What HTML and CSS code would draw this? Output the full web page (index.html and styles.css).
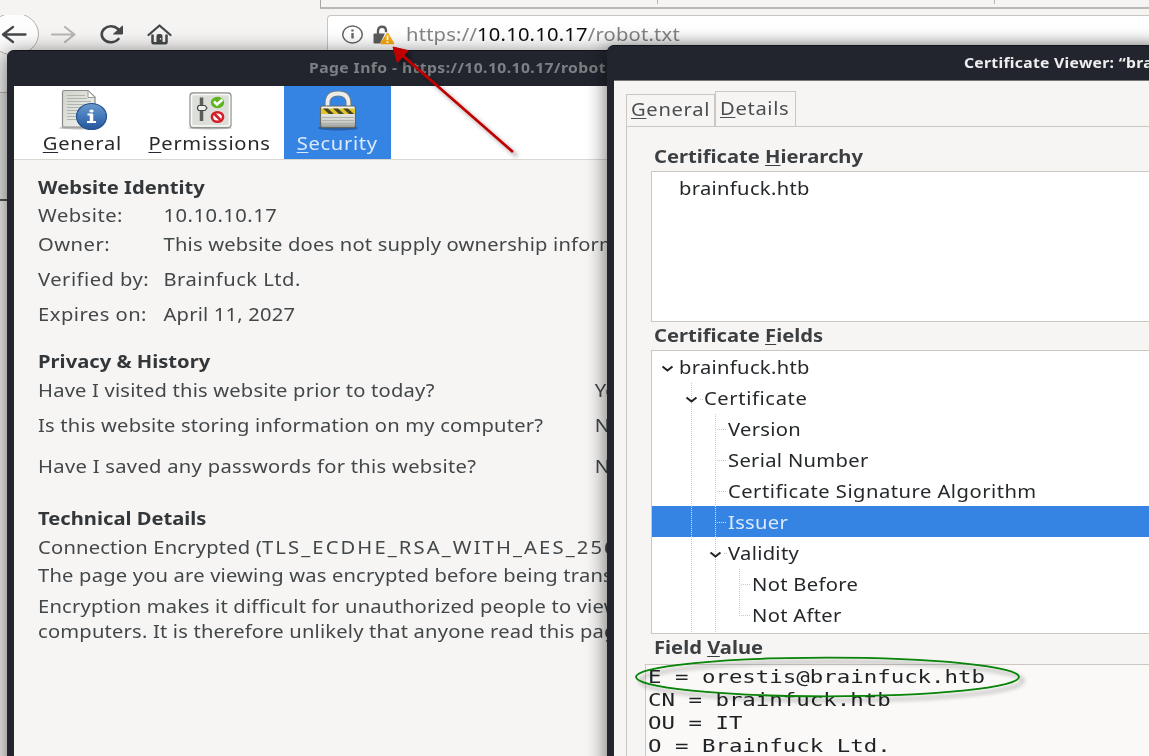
FILE: index.html
```html
<!DOCTYPE html>
<html lang="en">
<head>
<meta charset="utf-8">
<title>Certificate Viewer</title>
<link rel="stylesheet" href="styles.css">
</head>
<body>
<div class="desktop">
  <div class="browser">
    <div class="tabstrip"><i></i><i></i></div>
    <div class="navbar">
      <svg class="nav-icons" width="180" height="60" viewBox="0 0 180 60" fill="none">
        <ellipse cx="14" cy="19" rx="24.500" ry="21" fill="#fdfdfd" stroke="#b4b1ad"/>
        <path d="M25.500 19.500H3M13 12L3 19.500l10 7.500" stroke="#45484a" stroke-width="2.300" stroke-linecap="round" stroke-linejoin="round"/>
        <path d="M52 19.500h22M65 12L74.500 19.500l-9.500 7.500" stroke="#b5b5b5" stroke-width="2.200" stroke-linecap="round" stroke-linejoin="round"/>
        <path d="M118.500 24A9.300 8 0 1 1 118 14" stroke="#45484a" stroke-width="2.600" stroke-linecap="round"/>
        <path d="M122.500 11v8h-9z" fill="#45484a" stroke="#45484a" stroke-linejoin="round"/>
        <path d="M148.500 20L159.500 10.500l11 9.500" stroke="#45484a" stroke-width="2.300" stroke-linecap="round" stroke-linejoin="round"/>
        <path d="M152.500 19.500v7.800q0 1 1 1h12q1 0 1-1V19.500" stroke="#45484a" stroke-width="2.500"/>
        <path d="M156.500 21q0-2 2-2h2q2 0 2 2V28.500h-6z" fill="#45484a"/>
        <path d="M160.500 23v1.500" stroke="#f3f2f1" stroke-width="1.300"/>
      </svg>
      <div class="urlbar">
        <svg width="58" height="30" viewBox="0 0 58 30" fill="none">
          <ellipse cx="14.500" cy="14.500" rx="9.800" ry="8.500" stroke="#666" stroke-width="1.500"/>
          <path d="M14.500 13V18.500M14.500 9.500v1.900" stroke="#666" stroke-width="2.400"/>
          <path d="M40 15v-4q0-4.200 4-4.200t4 4v1.500" stroke="#5b5b5b" stroke-width="2.400"/>
          <path d="M36.500 13.500h10.500l-5 10h-5.500q-1 0-1-1v-8q0-1 1-1z" fill="#5b5b5b"/>
          <path d="M49.500 13.500l6 10H43z" fill="#f7a90c" stroke="#f7a90c" stroke-width="1.500" stroke-linejoin="round"/>
          <path d="M49.500 15.500v4.500M49.500 21.300v1.700" stroke="#fff" stroke-width="1.800"/>
        </svg>
        <span class="url wide">https://<b>10.10.10.17</b>/robot.txt</span>
      </div>
    </div>
    <div class="edge-lines"></div>
  </div>

  <section class="window page-info">
    <header class="titlebar"><span class="wide">Page Info - https://10.10.10.17/robot.txt</span></header>
    <div class="pi-body">
      <nav class="categories">
        <div class="category cat-general">
          <svg width="50" height="44" viewBox="0 0 50 44">
            <defs>
              <linearGradient id="paper" x2="1" y2="1"><stop stop-color="#cfd3cb"/><stop offset="1" stop-color="#f5f5f2"/></linearGradient>
              <linearGradient id="ball" x2="0" y2="1"><stop stop-color="#6c99cb"/><stop offset=".5" stop-color="#4479bb"/><stop offset="1" stop-color="#26559b"/></linearGradient>
            </defs>
            <g transform="translate(-1 0)">
            <ellipse cx="22" cy="40" rx="20" ry="1.500" fill="#bbb"/>
            <path d="M5.500 4q0-1.500 1.500-1.500h24l7 6.500v30h-32.500z" fill="url(#paper)" stroke="#8b8e86" stroke-width="1.200"/>
            <path d="M31 2.500v7h7z" fill="#fff" stroke="#999c94"/>
            <path d="M10 7.500h18M10 10.500h20M10 13.500h24M10 16.500h22M10 19.500h18M10 22.500h11M10 25.500h10M10 28.500h11M10 31.500h11" stroke="#b0b4ac" stroke-width="1.200"/>
            <ellipse cx="34.500" cy="28.500" rx="15" ry="13" fill="url(#ball)" stroke="#285393" stroke-width="1.200"/>
            <path d="M30.500 26.500h4v7.500M30 34h9" stroke="#fff" stroke-width="2.200" fill="none"/>
            <path d="M34.500 26v8" stroke="#fff" stroke-width="3.500"/>
            <ellipse cx="34.500" cy="23" rx="2.200" ry="1.500" fill="#fff"/>
            </g>
          </svg>
          <span><u>G</u>eneral</span>
        </div>
        <div class="category cat-permissions">
          <svg width="50" height="44" viewBox="0 0 50 44">
            <ellipse cx="25" cy="40" rx="22" ry="1.500" fill="#bbb"/>
            <rect x="5" y="5" width="41" height="34.500" rx="3" fill="#dcded9" stroke="#90938d" stroke-width="1.300"/>
            <rect x="6.500" y="6.500" width="38" height="31.500" rx="1.500" fill="none" stroke="#fafafa" stroke-width="1.500"/>
            <path d="M16.500 9.500v23.500" stroke="#5a5e5b" stroke-width="3.500"/>
            <path d="M13.500 17.500h6.500l2 2.500-2 2.500h-6.500q-2-2.500 0-5z" fill="#eee" stroke="#444846" stroke-width="1.200"/>
            <ellipse cx="32.500" cy="14.500" rx="6.700" ry="5.700" fill="#5eb51c"/>
            <path d="M29 13.500l3 3 5.500-5" stroke="#fff" stroke-width="2.600" fill="none"/>
            <ellipse cx="32.500" cy="29" rx="5.600" ry="4.800" fill="#fff" stroke="#d51f27" stroke-width="2.600"/>
            <path d="M29.500 26l6 6" stroke="#d51f27" stroke-width="2.600"/>
          </svg>
          <span><u>P</u>ermissions</span>
        </div>
        <div class="category cat-security selected">
          <svg width="50" height="44" viewBox="0 0 50 44">
            <defs>
              <linearGradient id="steel" x2="0" y2="1"><stop stop-color="#f7f7f5"/><stop offset=".7" stop-color="#d2d3cf"/><stop offset="1" stop-color="#969993"/></linearGradient>
            </defs>
            <ellipse cx="25" cy="40" rx="20" ry="2.500" fill="#25528e" opacity=".75"/>
            <path d="M14.500 22V15Q14.500 5.500 25 5.500T35.500 15v7" fill="none" stroke="#787b76" stroke-width="5.500"/>
            <path d="M14.500 22V15Q14.500 5.500 25 5.500T35.500 15v7" fill="none" stroke="#ecedea" stroke-width="3.800"/>
            <rect x="7.500" y="18" width="35" height="21.500" rx="2" fill="url(#steel)" stroke="#646760" stroke-width="1.200"/>
            <path d="M8 20.500h34v5.500H8z" fill="#dfc52c"/>
            <path d="M16 26l-6-5.500h5l6 5.500zM26 26l-6-5.500h5l6 5.500zM36 26l-6-5.500h5l6 5.500z" fill="#4a4520"/>
            <path d="M9 29.500h32M9 32.500h32M9 35.500h32" stroke="#b0b2ad"/>
          </svg>
          <span><u>S</u>ecurity</span>
        </div>
      </nav>
      <div class="pi-content wide">
        <h2>Website Identity</h2>
        <dl>
          <div class="row looser"><dt>Website:</dt><dd>10.10.10.17</dd></div>
          <div class="row g1"><dt class="looser">Owner:</dt><dd>This website does not supply ownership information.</dd></div>
          <div class="row looser g7"><dt>Verified by:</dt><dd>Brainfuck Ltd.</dd></div>
          <div class="row g7"><dt class="looser">Expires on:</dt><dd>April 11, 2027</dd></div>
        </dl>
        <h2 class="g19">Privacy &amp; History</h2>
        <div class="row question g1"><span>Have I visited this website prior to today?</span><b>Yes</b></div>
        <div class="row question g7"><span>Is this website storing information on my computer?</span><b>No</b></div>
        <div class="row question g13"><span class="passwords">Have I saved any passwords for this website?</span><b>No</b></div>
        <h2 class="g24">Technical Details</h2>
        <p class="g1">Connection Encrypted (<span class="cipher">TLS_ECDHE_RSA_WITH_AES_256_GCM_SHA384)</span></p>
        <p>The page you are viewing was encrypted before being transmitted.</p>
        <p class="g5 tight">Encryption makes it difficult for unauthorized people to view</p>
        <p class="tight">computers. It is therefore unlikely that anyone read this page</p>
      </div>
    </div>
  </section>

  <section class="window cert">
    <header class="titlebar"><span class="wide">Certificate Viewer: “brainfuck.htb”</span></header>
    <div class="cert-body">
      <div class="tabs">
        <div class="tab"><span class="wide"><u>G</u>eneral</span></div>
        <div class="tab active"><span class="wide"><u>D</u>etails</span></div>
      </div>
      <div class="panel">
        <h3><span class="wide">Certificate <u>H</u>ierarchy</span></h3>
        <div class="box hierarchy"><span class="wide">brainfuck.htb</span></div>
        <h3><span class="wide">Certificate <u>F</u>ields</span></h3>
        <div class="box tree">
          <svg class="guides" width="100" height="282" fill="none">
            <g stroke="#c9c9c9" stroke-dasharray="1 1">
              <path d="M39.500 32V155M39.500 186V281M63.500 63V155M63.500 186V281M87.500 218v48M48 48.500h4M65 78.500h9M65 109.500h9M65 140.500h9M72 202.500h3M89 233.500h9M89 264.500h9"/>
            </g>
            <path d="M39.500 155v31M63.500 155v31M65 171.500h9" stroke="#d5e5fa" stroke-dasharray="1 1"/>
            <path d="M10.500 15.500l5 4 5-4M34.500 46.500l5 4 5-4M58.500 201.500l5 4 5-4" stroke="#222" stroke-width="2"/>
          </svg>
          <div class="item l0"><span class="wide">brainfuck.htb</span></div>
          <div class="item l1"><span class="wide looser">Certificate</span></div>
          <div class="item l2"><span class="wide">Version</span></div>
          <div class="item l2"><span class="wide">Serial Number</span></div>
          <div class="item l2"><span class="wide algorithm">Certificate Signature Algorithm</span></div>
          <div class="item l2 current"><span class="wide">Issuer</span></div>
          <div class="item l2"><span class="wide">Validity</span></div>
          <div class="item l3"><span class="wide">Not Before</span></div>
          <div class="item l3"><span class="wide">Not After</span></div>
        </div>
        <h3 class="value-label"><span class="wide">Field <u>V</u>alue</span></h3>
        <pre class="value"><span>E = orestis@brainfuck.htb
CN = brainfuck.htb
OU = IT
O = Brainfuck Ltd.</span></pre>
      </div>
    </div>
  </section>

  <svg class="annotations" width="1149" height="756" fill="none">
    <defs><filter id="soft" x="-10%" y="-20%" width="120%" height="150%"><feDropShadow dx="4" dy="4" stdDeviation="2" flood-opacity=".4"/></filter></defs>
    <g filter="url(#soft)">
      <path d="M402 55L513 152" stroke="#c00000" stroke-width="2.800"/>
      <path d="M393 47l15 3.500-10.500 12z" fill="#c00000" stroke="#c00000"/>
    </g>
    <ellipse cx="827.500" cy="677" rx="191.500" ry="19.300" stroke="#078207" stroke-width="1.800" filter="url(#soft)"/>
  </svg>
</div>
</body>
</html>
```
FILE: styles.css
```css
* { box-sizing: border-box; }
body { margin: 0; font-family: "Noto Sans", "Open Sans", sans-serif; }
.desktop { position: relative; width: 1149px; height: 756px; overflow: hidden; background: #f5f4f3; }
u { text-underline-offset: 2px; text-decoration-thickness: 1px; }
h2, h3, p, dl, dd, pre { margin: 0; }

/* horizontally extended letterforms */
.wide { display: inline-block; transform: scaleX(1.12); transform-origin: 0 0; }

.browser { height: 756px; display: flex; flex-direction: column; }
.tabstrip { height: 9px; margin-left: 320px; border-left: 1px solid #aaa8a5; border-bottom: 2px solid #bab7b5; display: flex; }
.tabstrip i { width: 337px; height: 4px; border-right: 1px solid #b8b5b3; }
.navbar { display: flex; height: 84px; padding-top: 6px; border-bottom: 1px solid #b9b6b3; }
.nav-icons { flex: none; margin-right: 147px; }
.urlbar { flex: 1; height: 40px; border: 1px solid #c9c5c1; border-right: 0; border-radius: 4px 0 0 0; background: #fff; display: flex; padding: 3px 0 0 10px; }
.urlbar svg { margin-top: 1px; flex: none; }
.url { margin-left: 10px; font-size: 18px; line-height: 31px; color: #858585; white-space: nowrap; letter-spacing: .18px; }
.url b { font-weight: 400; color: #0c0c0d; }
.edge-lines { width: 7px; height: 108px; border-bottom: 2px solid #555; background: #e8e7e6; }

.window { position: absolute; background: #22252e; overflow: hidden; }
.titlebar { white-space: nowrap; font-weight: 700; font-size: 14px; }
.page-info { left: 7px; top: 50px; width: 1149px; height: 730px; border-radius: 7px 0 0 0; box-shadow: 0 4px 20px 2px rgba(0,0,0,.5); border-top: 1px solid #11141a; }
.page-info .titlebar { height: 35px; line-height: 34px; padding-left: 302px; color: #7c8084; letter-spacing: .38px; }
.pi-body { height: 700px; margin-left: 7px; background: #f6f5f4; }
.categories { height: 74px; background: #fff; border-bottom: 1px solid #dad6d2; display: flex; }
.category { display: flex; flex-direction: column; align-items: center; font-size: 18px; color: #26282a; letter-spacing: .6px; }
.category svg { margin-top: 2px; flex: none; }
.category span { line-height: 23px; transform: scaleX(1.12); }
.cat-general { width: 137px; }
.cat-permissions { width: 117px; }
.cat-security { width: 107px; margin-left: 16px; }
.category.selected { background: #3584e4; color: #dce9fa; height: 73px; }
.pi-content { padding: 13px 0 0 21.500px; font-size: 18px; line-height: 28px; color: #434749; white-space: nowrap; letter-spacing: .16px; }
.pi-content h2 { font-size: 18px; line-height: 28px; font-weight: 700; color: #343739; letter-spacing: 0; }
.row { display: flex; height: 28px; }
.row dt { width: 112px; }
.question span { width: 497px; }
.question b { font-weight: 400; }
.looser { letter-spacing: .42px; }
.passwords { letter-spacing: .26px; }
.cipher { letter-spacing: 1.9px; }
.g1 { margin-top: 1px; }
.g5 { margin-top: 5px; }
.g7 { margin-top: 7px; }
.g13 { margin-top: 13px; }
.g19 { margin-top: 19px; }
.g24 { margin-top: 24px; }
.pi-content .tight { line-height: 25px; }

.cert { left: 607px; top: 45px; width: 1000px; height: 760px; border-radius: 7px 0 0 0; border-top: 1px solid #11141a; box-shadow: 0 4px 20px 1px rgba(0,0,0,.55); }
.cert .titlebar { height: 34px; line-height: 33px; padding-left: 357px; color: #eee; letter-spacing: .27px; }
.cert-body { margin-left: 7px; height: 720px; padding: 10px 0 0 12px; background: #f6f5f4; border-top: 1px solid #777; }
.tabs { height: 35px; display: flex; align-items: flex-end; font-size: 18px; color: #4b4e50; letter-spacing: .6px; }
.tab { height: 32px; width: 89px; padding-left: 4px; line-height: 29px; border: 1px solid #cdc7c2; border-bottom: 0; }
.tab.active { width: 81px; height: 35px; line-height: 32px; }
.panel { height: 680px; border-left: 1px solid #cdc7c2; border-top: 1px solid #cdc7c2; padding: 16px 0 0 24px; }
h3 { height: 28px; line-height: 26px; padding-left: 3px; font-size: 18px; color: #3c3f42; }
.box { background: #fff; border: 1px solid #cdc7c2; color: #25282a; font-size: 18px; letter-spacing: .28px; }
.hierarchy { height: 151px; padding: 3px 0 0 27px; line-height: 27px; }
.tree { height: 284px; position: relative; }
.guides { position: absolute; left: 0; top: 0; z-index: 1; }
.item { height: 31px; line-height: 32px; }
.item .wide { line-height: 30px; }
.item .looser { letter-spacing: .55px; }
.item .algorithm { letter-spacing: .44px; }
.l0 { padding-left: 27px; }
.l1 { padding-left: 52px; }
.l2 { padding-left: 76px; }
.l3 { padding-left: 100px; }
.current { background: #3584e4; color: #dce9fa; }
.value-label { height: 30px; }
.value { margin-left: -6px; height: 120px; padding: 0 0 0 2px; border: 1px solid #cdc7c2; background: #faf9f8; color: #202326; font: 18px/23px "DejaVu Sans Mono", monospace; }
.value span { display: inline-block; transform: scaleX(1.244); transform-origin: 0 0; }
.annotations { position: absolute; left: 0; top: 0; }
```
